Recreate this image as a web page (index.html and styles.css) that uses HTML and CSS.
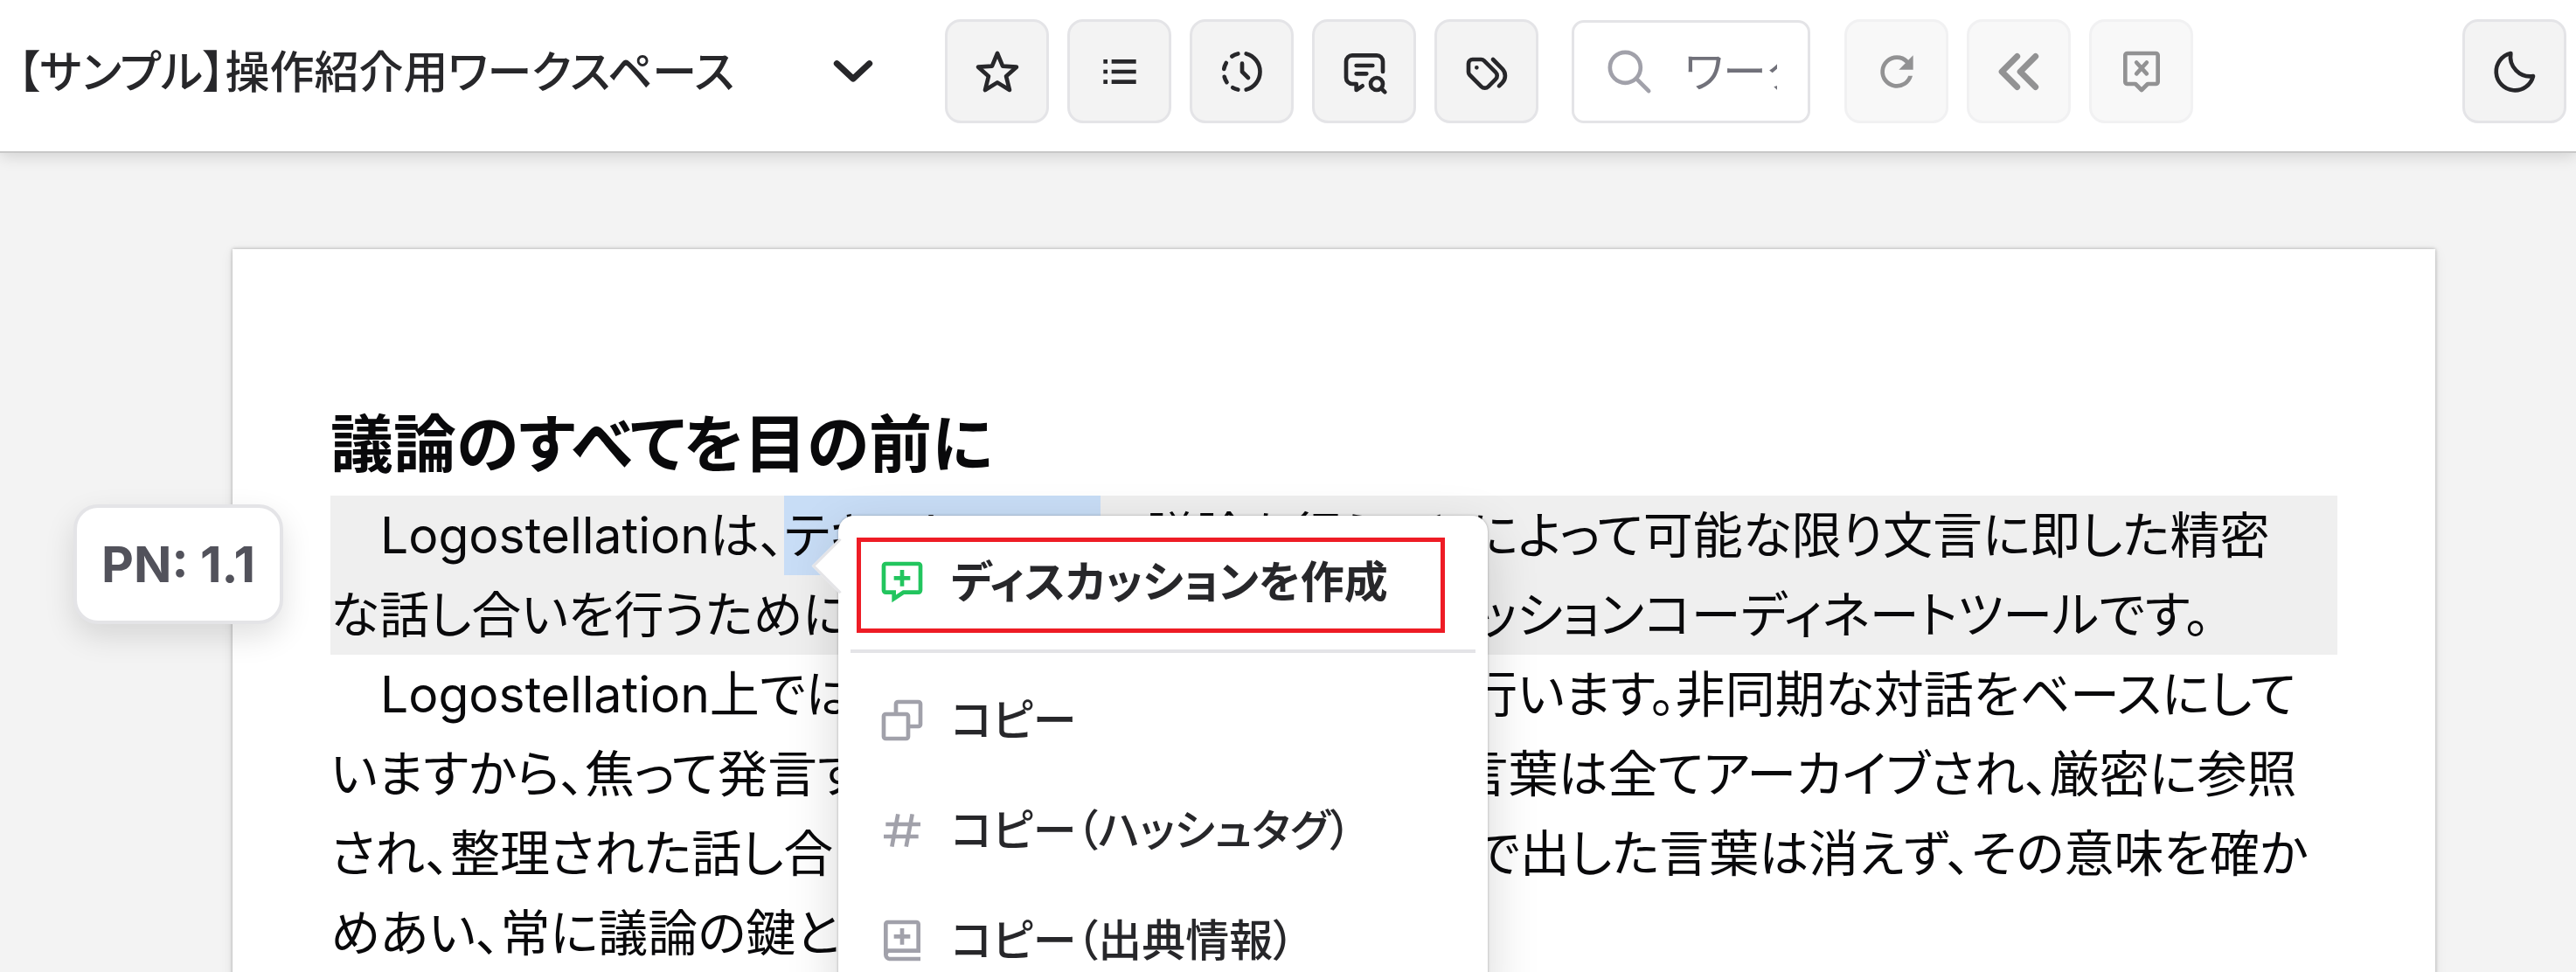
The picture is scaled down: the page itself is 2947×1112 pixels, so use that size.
FILE: index.html
```html
<!DOCTYPE html>
<html lang="ja">
<head>
    <meta charset="UTF-8">
    <meta name="viewport" content="width=device-width, initial-scale=1.0">
    <title>【サンプル】操作紹介用ワークスペース</title>
    <link rel="stylesheet" href="styles.css">
</head>
<body>

    <header class="toolbar">
        <button class="workspace" type="button">
            <span>【サンプル】操作紹介用ワークスペース</span>
            <svg class="chevron" viewBox="0 0 24 24"><path d="M4 8l8 7.500 8-7.500"/></svg>
        </button>

        <div class="group">
            <button class="tool" type="button" aria-label="お気に入り">
                <svg class="icon line" viewBox="0 0 24 24"><path d="M12 3l2.600 6.300 6.800.4-5.100 4.500 1.700 6.800-6-3.700L6 21l1.700-6.800-5.100-4.500 6.800-.4z"/></svg>
            </button>
            <button class="tool" type="button" aria-label="目次">
                <svg class="icon" viewBox="0 0 24 24"><path d="M4 6h2v2H4zM4 11h2v2H4zM4 16h2v2H4zM8 6h12v2H8zM8 11h12v2H8zM8 16h12v2H8z"/></svg>
            </button>
            <button class="tool" type="button" aria-label="履歴">
                <svg class="icon line" viewBox="0 0 24 24"><path d="M14 3.200a9.100 9.100 0 0 1 0 17.600M10 3.200a9 9 0 0 0-3 1.300M4.200 7.700a9 9 0 0 0-1.100 3M3.300 14.500a9 9 0 0 0 1.200 2.700M7.400 19.800a9 9 0 0 0 2.600 1M12 8v4l3 3"/></svg>
            </button>
            <button class="tool" type="button" aria-label="ディスカッション検索">
                <svg class="icon line" viewBox="0 0 24 24"><path d="M21 12V7a3 3 0 0 0-3-3H6a3 3 0 0 0-3 3v8a3 3 0 0 0 3 3h2v3l3-2M8 9h8M8 13h5M21 18a3 3 0 1 1-6 0 3 3 0 0 1 6 0zM20.200 20.200L22 22"/></svg>
            </button>
            <button class="tool" type="button" aria-label="タグ">
                <svg class="icon line" viewBox="0 0 24 24"><path d="M3 8v4.200c0 .5.200 1 .6 1.400l5.700 5.700a2.400 2.400 0 0 0 3.400 0l3.600-3.600a2.400 2.400 0 0 0 0-3.400l-5.700-5.700A2 2 0 0 0 9.200 6H5a2 2 0 0 0-2 2zM15 6l4.600 4.700a4.800 4.800 0 0 1 0 6.700L18 19M7 10h.01"/></svg>
            </button>
        </div>

        <label class="search">
            <svg class="search-icon" viewBox="0 0 24 24"><circle cx="10" cy="10" r="7.500"/><path d="M15.500 15.500l6 6"/></svg>
            <input type="text" placeholder="ワークスペース内を検索" aria-label="検索">
        </label>

        <div class="group">
            <button class="tool" type="button" disabled aria-label="更新">
                <svg class="icon" viewBox="0 0 24 24"><path d="M17.650 6.350A7.960 7.960 0 0 0 12 4a8 8 0 1 0 7.730 10h-2.080A6 6 0 1 1 12 6c1.660 0 3.140.69 4.220 1.780L13 11h7V4z"/></svg>
            </button>
            <button class="tool" type="button" disabled aria-label="戻る">
                <svg class="icon double" viewBox="0 0 24 24"><path d="M11 4.500L3.500 12l7.500 7.500M20 4.500L12.500 12l7.500 7.500"/></svg>
            </button>
            <button class="tool" type="button" disabled aria-label="閉じる">
                <svg class="icon line" viewBox="0 0 24 24"><path d="M5 3h14a1 1 0 0 1 1 1v13a1 1 0 0 1-1 1h-4l-3 3-3-3H5a1 1 0 0 1-1-1V4a1 1 0 0 1 1-1zM9.500 7.500l5 5.500M14.500 7.500l-5 5.500"/></svg>
            </button>
        </div>

        <button class="tool theme" type="button" aria-label="ダークモード">
            <svg class="icon line" viewBox="0 0 24 24"><path d="M10 3a9.200 9.200 0 1 0 11 11.200A9.700 9.700 0 0 1 10 3z"/></svg>
        </button>
    </header>

    <main class="page">
        <h1>議論のすべてを目の前に</h1>
        <div class="block current">
            <span class="pn">PN: 1.1</span>
            <p>　Logostellationは、<mark>テキストベース</mark>で議論を行うことによって可能な限り文言に即した精密<br>な話し合いを行うために設計されたチャット型ディスカッションコーディネートツールです。</p>

            <div class="menu">
                <button class="item primary" type="button">
                    <svg class="icon" viewBox="0 0 24 24"><path d="M20 2H4a2 2 0 0 0-2 2v12a2 2 0 0 0 2 2h3v4l6-4h7a2 2 0 0 0 2-2V4a2 2 0 0 0-2-2zm0 14h-7.600L9 18.200V16H4V4h16zM11 6h2v3h3v2h-3v3h-2v-3H8V9h3z"/></svg>
                    ディスカッションを作成
                </button>
                <hr>
                <button class="item" type="button">
                    <svg class="icon" viewBox="0 0 24 24"><path d="M20 2H10a2 2 0 0 0-2 2v4H4a2 2 0 0 0-2 2v10a2 2 0 0 0 2 2h10a2 2 0 0 0 2-2v-4h4a2 2 0 0 0 2-2V4a2 2 0 0 0-2-2zM4 20V10h10v10zm16-6h-4v-4a2 2 0 0 0-2-2h-4V4h10z"/></svg>
                    コピー
                </button>
                <button class="item" type="button">
                    <svg class="icon hash" viewBox="0 0 24 24"><path d="M10 4L7 20M17 4l-3 16M4 9h17M3 15h17"/></svg>
                    コピー（ハッシュタグ）
                </button>
                <button class="item" type="button">
                    <svg class="icon" viewBox="0 0 24 24"><path d="M21 18H6a1 1 0 0 0 0 2h15v2H6a3 3 0 0 1-3-3V4a2 2 0 0 1 2-2h14a2 2 0 0 1 2 2zM5 16h14V4H5zM11 6h2v3h3v2h-3v3h-2v-3H8V9h3z"/></svg>
                    コピー（出典情報）
                </button>
            </div>
        </div>
        <div class="block">
            <p>　Logostellation上では、参加者が相互の文で対話を行います。非同期な対話をベースにして<br>いますから、焦って発言する必要は無いです。書かれた言葉は全てアーカイブされ、厳密に参照<br>され、整理された話し合いを継続されます。あなたの手で出した言葉は消えず、その意味を確か<br>めあい、常に議論の鍵となります。</p>
        </div>
    </main>

</body>
</html>
```
FILE: styles.css
```css
* {
    box-sizing: border-box;
}
body {
    margin: 0;
    height: 100vh;
    overflow: hidden;
    background: #f3f3f3;
    color: #09090b;
    font-family: Inter, "Noto Sans CJK JP", sans-serif;
    font-feature-settings: "palt";
}
button, input {
    font: inherit;
    font-feature-settings: inherit;
    color: inherit;
}
.toolbar {
    position: relative;
    display: flex;
    align-items: center;
    height: 175px;
    padding: 0 11px 10px 20px;
    background: #fff;
    border-bottom: 2px solid #c8c8c8;
    box-shadow: 0 3px 18px rgba(0, 0, 0, 0.15);
    color: #27272a;
}
.workspace {
    display: flex;
    align-items: center;
    justify-content: space-between;
    width: 984px;
    margin-right: 77px;
    padding: 0;
    border: 0;
    background: none;
    font-size: 51px;
    font-weight: 500;
    white-space: nowrap;
}
.workspace span {
    padding-bottom: 6px;
}
.chevron {
    width: 56px;
    height: 56px;
    fill: none;
    stroke: currentColor;
    stroke-width: 3;
    stroke-linecap: round;
    stroke-linejoin: round;
}
.group {
    display: flex;
    gap: 21px;
}
.tool {
    display: flex;
    align-items: center;
    justify-content: center;
    width: 119px;
    height: 119px;
    padding: 0;
    border: 3px solid #e4e4e7;
    border-radius: 18px;
    background: #f3f3f3;
}
.tool:disabled {
    opacity: 0.5;
}
.theme {
    margin-left: auto;
}
.icon {
    flex: none;
    width: 56px;
    height: 56px;
    fill: currentColor;
}
.line, .double, .hash {
    fill: none;
    stroke: currentColor;
    stroke-width: 2;
}
.line {
    stroke-linecap: round;
    stroke-linejoin: round;
}
.double {
    stroke-width: 3;
    stroke-linecap: round;
    stroke-linejoin: round;
}
.search {
    display: flex;
    align-items: center;
    gap: 35px;
    width: 273px;
    height: 118px;
    margin: 0 39px 0 38px;
    padding: 0 35px;
    border: 3px solid #e4e4e7;
    border-radius: 14px;
    background: #fff;
}
.search-icon {
    flex: none;
    width: 56px;
    height: 56px;
    fill: none;
    stroke: #a1a1aa;
    stroke-width: 2;
    stroke-linecap: round;
}
.search input {
    min-width: 0;
    flex: 1;
    padding: 0;
    border: 0;
    outline: 0;
    background: none;
    font-size: 50px;
}
.search input::placeholder {
    color: #71717a;
}
.page {
    min-height: 900px;
    margin: 110px 161px 0 266px;
    padding: 168px 112px;
    background: #fff;
    box-shadow: 0 0 4px rgba(0, 0, 0, 0.3), 0 3px 14px rgba(0, 0, 0, 0.08);
}
h1 {
    margin: 0 0 4px;
    font-size: 72px;
    font-weight: 700;
    line-height: 110px;
}
.block {
    position: relative;
    font-size: 57px;
    line-height: 91px;
    white-space: nowrap;
}
.block p {
    margin: 0;
}
.current {
    z-index: 1;
    background: #efefef;
}
mark {
    padding: 11px 0;
    background: #c8ddf6;
    color: inherit;
}
.pn {
    position: absolute;
    left: -294px;
    top: 10px;
    padding: 19px 28px;
    border: 4px solid #e4e4e7;
    border-radius: 28px;
    background: #fff;
    box-shadow: 0 14px 35px rgba(0, 0, 0, 0.12);
    color: #52525b;
    font-size: 57px;
    font-weight: 700;
}
.menu {
    position: absolute;
    left: 581px;
    top: 23px;
    width: 743px;
    padding: 13px 14px;
    border-radius: 18px;
    background: #fff;
    box-shadow: 0 0 3px rgba(0, 0, 0, 0.3), 0 20px 60px rgba(0, 0, 0, 0.16);
    color: #27272a;
}
/* arrow pointing at the selected text */
.menu::before {
    content: "";
    position: absolute;
    left: -21px;
    top: 35px;
    width: 42px;
    height: 42px;
    background: #fff;
    border-left: 3px solid #e4e4e7;
    border-bottom: 3px solid #e4e4e7;
    transform: rotate(45deg);
}
.menu hr {
    height: 4px;
    margin: 14px 0;
    border: 0;
    background: #e4e4e7;
}
.item {
    position: relative;
    display: flex;
    align-items: center;
    gap: 28px;
    width: 100%;
    height: 126px;
    padding: 0 31px;
    border: 0;
    background: none;
    font-size: 50px;
    font-weight: 500;
    white-space: nowrap;
}
.item .icon {
    color: #a1a1aa;
}
.primary {
    font-weight: 700;
}
.primary .icon {
    color: #22c55e;
}
.primary::after {
    content: "";
    position: absolute;
    inset: 12px 35px 5px 7px;
    border: 5px solid #ee1c25;
}
```
